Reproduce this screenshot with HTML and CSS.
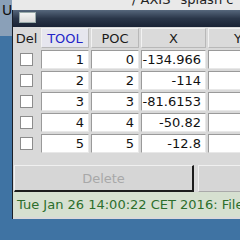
FILE: index.html
```html
<!DOCTYPE html>
<html>
<head><link rel="stylesheet" href="styles.css"></head>
<body>
<div class="desktop">
  <div class="backwin-left">U</div>
  <div class="backwin-top">/ AXIS "splash c</div>
  <div class="win">
    <div class="titlebar"><span class="ticon"></span></div>
    <div class="content">
      <div class="grid">
        <div class="hcell del">Del</div>
        <div class="hcell sel">TOOL</div>
        <div class="hcell">POC</div>
        <div class="hcell">X</div>
        <div class="hcell">Y</div>

        <div class="cbcell"><span class="cb"></span></div>
        <div class="cell">1</div><div class="cell">0</div><div class="cell">-134.966</div><div class="cell"></div>
        <div class="cbcell"><span class="cb"></span></div>
        <div class="cell">2</div><div class="cell">2</div><div class="cell">-114</div><div class="cell"></div>
        <div class="cbcell"><span class="cb"></span></div>
        <div class="cell">3</div><div class="cell">3</div><div class="cell">-81.6153</div><div class="cell"></div>
        <div class="cbcell"><span class="cb"></span></div>
        <div class="cell">4</div><div class="cell">4</div><div class="cell">-50.82</div><div class="cell"></div>
        <div class="cbcell"><span class="cb"></span></div>
        <div class="cell">5</div><div class="cell">5</div><div class="cell">-12.8</div><div class="cell"></div>
      </div>
      <div class="buttons">
        <div class="btn focus">Delete</div>
        <div class="btn other"></div>
      </div>
      <div class="status">Tue Jan 26 14:00:22 CET 2016: File</div>
    </div>
  </div>
</div>
</body>
</html>
```
FILE: styles.css
```css
html, body { margin: 0; padding: 0; }
body { width: 240px; height: 240px; overflow: hidden; font-family: "DejaVu Sans", sans-serif; }
.desktop { position: relative; width: 240px; height: 240px; background: #3f73a3; overflow: hidden; }
.backwin-left { position: absolute; left: -20px; top: -4px; width: 32px; height: 40px; background: #8aa0b8; color: #111; font-size: 14px; padding: 6px 0 0 22px; box-sizing: border-box; }
.backwin-top { position: absolute; left: 12px; top: -8px; width: 240px; height: 20px; background: #e9e9e9; color: #222; font-size: 13px; padding-left: 120px; box-sizing: border-box; }
.win { position: absolute; left: 12px; top: 10px; width: 260px; height: 209px; background: #d9d9d9; border-left: 1px solid #1a1f28; box-sizing: border-box; }
.titlebar { height: 17px; background: linear-gradient(#56677c, #2a3649 50%, #1a2335); display: flex; align-items: center; padding-left: 6px; }
.ticon { display: block; width: 15px; height: 9px; background: linear-gradient(#f4f4f4, #d8d8d8); border: 1px solid #9aa; margin-top: -2px; }
.content { display: flex; flex-direction: column; }
.grid { display: grid; grid-template-columns: 25px 48px 48px 65px 60px; grid-template-rows: 20px repeat(5, 21px); column-gap: 2px; padding: 1px 0 0 1px; margin-bottom: 0; }
.hcell { font-size: 13px; color: #1a1a1a; display: flex; align-items: center; justify-content: center; border: 1px solid #b8b8b8; border-top-color: #f2f2f2; border-left-color: #f2f2f2; background: #dadada; box-sizing: border-box; }
.hcell.del { border: none; background: transparent; }
.hcell.sel { color: #2424c8; background: #e6e6ee; }
.cbcell { display: flex; align-items: center; justify-content: center; padding-top: 2px; }
.cb { display: block; width: 11px; height: 11px; background: #fff; border: 1px solid #8c8c8c; }
.cell { margin-top: 2px; background: #fff; border: 1px solid #9a9a9a; border-right-color: #e8e8e8; border-bottom-color: #e8e8e8; box-sizing: border-box; font-size: 13px; color: #111; text-align: right; padding-right: 4px; line-height: 17px; }
.buttons { display: flex; gap: 4px; margin-top: 12px; height: 27px; padding-left: 1px; }
.btn { box-sizing: border-box; font-size: 13px; color: #a8a8a8; display: flex; align-items: center; justify-content: center; background: #d6d6d6; }
.btn.focus { width: 180px; border: 2px solid #1c1c1c; border-top: 1px solid #f0f0f0; border-left: 1px solid #f0f0f0; }
.btn.other { width: 60px; border: 1px solid #f0f0f0; border-right-color: #aaa; border-bottom-color: #aaa; }
.status { height: 25px; background: #d6e0d0; color: #2c6e2c; font-size: 13px; display: flex; align-items: center; padding-left: 4px; white-space: nowrap; }
```
